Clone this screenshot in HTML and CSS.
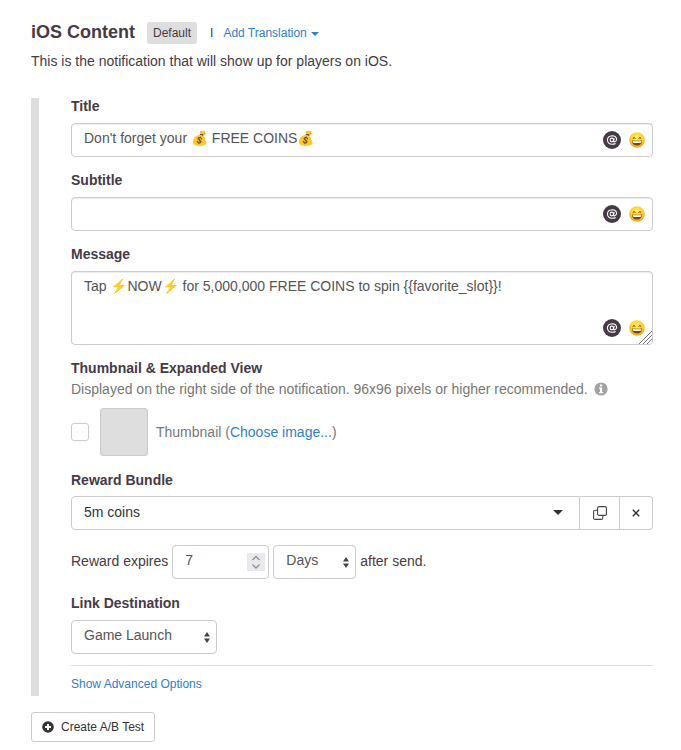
FILE: index.html
```html
<!DOCTYPE html>
<html lang="en">
<head>
<meta charset="utf-8">
<meta name="viewport" content="width=device-width, initial-scale=1">
<title>iOS Content</title>
<link rel="stylesheet" href="styles.css">
</head>
<body>
<svg class="sprite" aria-hidden="true">
  <defs>
    <radialGradient id="face" cx="50%" cy="35%" r="65%">
      <stop offset="0" stop-color="#ffec5c"/><stop offset=".6" stop-color="#fdd036"/><stop offset="1" stop-color="#eda01c"/>
    </radialGradient>
    <symbol id="grin" viewBox="0 0 16 16">
      <circle cx="8" cy="8" r="7.8" fill="url(#face)"/>
      <path d="M4 6.2Q5.1 4.8 6.2 6.2M9.800 6.200Q10.900 4.800 12 6.200" fill="none" stroke="#6b3d12" stroke-width="1" stroke-linecap="round"/>
      <path d="M2.800 8.400Q8 9 13.200 8.400Q12.800 13.500 8 13.500T2.800 8.400Z" fill="#7a4616"/>
      <path d="M3.500 9Q8 9.600 12.500 9L12.100 10.700Q8 11.300 3.900 10.700Z" fill="#fff"/>
    </symbol>
    <symbol id="at" viewBox="0 0 18 18">
      <circle cx="9" cy="9" r="9" fill="#463a47"/>
      <ellipse cx="8.800" cy="9" rx="1.700" ry="1.900" fill="none" stroke="#fff" stroke-width="1.100"/>
      <path d="M11.200 7L10.600 10Q10.700 11.100 11.800 10.800Q13.700 10.100 13.600 8.300Q13.200 4.800 9.200 4.700Q4.600 4.900 4.400 9Q4.800 13.200 9.100 13.300Q11 13.300 12.600 12.400" fill="none" stroke="#fff" stroke-width="1.100"/>
    </symbol>
  </defs>
</svg>

<main class="page">
  <header class="heading">
    <h1>iOS Content</h1>
    <span class="badge">Default</span>
    <span class="divider">I</span>
    <a class="small-link" href="#translate">Add Translation<span class="caret"></span></a>
  </header>
  <p class="intro">This is the notification that will show up for players on iOS.</p>

  <form class="panel">
    <div class="field">
      <label for="title">Title</label>
      <div class="box">
        <input class="control" id="title" type="text" value="Don't forget your 💰 FREE COINS💰">
        <div class="tools">
          <button type="button" aria-label="Insert variable"><svg class="at"><use href="#at"/></svg></button>
          <button type="button" aria-label="Insert emoji"><svg class="grin"><use href="#grin"/></svg></button>
        </div>
      </div>
    </div>
    <div class="field">
      <label for="subtitle">Subtitle</label>
      <div class="box">
        <input class="control" id="subtitle" type="text">
        <div class="tools">
          <button type="button" aria-label="Insert variable"><svg class="at"><use href="#at"/></svg></button>
          <button type="button" aria-label="Insert emoji"><svg class="grin"><use href="#grin"/></svg></button>
        </div>
      </div>
    </div>
    <div class="field">
      <label for="message">Message</label>
      <div class="box">
        <textarea class="control" id="message" rows="3">Tap ⚡NOW⚡ for 5,000,000 FREE COINS to spin {{favorite_slot}}!</textarea>
        <div class="tools">
          <button type="button" aria-label="Insert variable"><svg class="at"><use href="#at"/></svg></button>
          <button type="button" aria-label="Insert emoji"><svg class="grin"><use href="#grin"/></svg></button>
        </div>
        <svg class="grip" viewBox="0 0 13 13" aria-hidden="true"><path d="M0 13L13 0M4 13L13 4M8 13L13 8" fill="none" stroke="#777"/></svg>
      </div>
    </div>

    <div class="field thumbnail">
      <h2>Thumbnail &amp; Expanded View</h2>
      <p class="help">Displayed on the right side of the notification. 96x96 pixels or higher recommended.
        <svg class="info" viewBox="0 0 14 14" aria-hidden="true"><circle cx="7" cy="7" r="6.6" fill="#a3a3a3"/><path d="M5.9 2.5H8.1V4.4H5.9ZM5 5.5H8.1V10H9.2V11.3H5V10H6V6.8H5Z" fill="#fff"/></svg></p>
      <div class="thumb-row">
        <input type="checkbox" id="thumb">
        <span class="swatch"></span>
        <span class="thumb-text"><label for="thumb">Thumbnail</label> (<a href="#image">Choose image...</a>)</span>
      </div>
    </div>

    <div class="field reward">
      <label for="bundle">Reward Bundle</label>
      <div class="group">
        <div class="bundle">
          <select class="control" id="bundle"><option>5m coins</option></select>
          <svg class="down" viewBox="0 0 10 5" aria-hidden="true"><path d="M0 0H10L5 5Z" fill="#333"/></svg>
        </div>
        <button type="button" class="addon" aria-label="Duplicate"><svg width="14" height="14" viewBox="0 0 14 14" fill="none" stroke="#444" stroke-width="1.1"><rect x="4.6" y=".6" width="8.8" height="8.8" rx="1.5"/><path d="M4.6 4.2H2.1Q.6 4.2.6 5.7V11.9Q.6 13.4 2.1 13.4H8.3Q9.8 13.4 9.8 11.9V9.4"/></svg></button>
        <button type="button" class="addon" aria-label="Clear"><svg width="8" height="8" viewBox="0 0 8 8"><path d="M.8.8L7.200 7.200M7.200.8L.8 7.200" stroke="#333" stroke-width="1.400"/></svg></button>
      </div>
    </div>

    <div class="expires">
      <label for="amount">Reward expires</label>
      <div class="amount">
        <input class="control" id="amount" type="number" value="7">
        <svg class="spin" viewBox="0 0 18 18" aria-hidden="true"><path d="M0 0H18V18H0Z" fill="#e9e9ed"/><path d="M5.500 7L9 3.500L12.500 7M5.500 11.500L9 15L12.500 11.500" fill="none" stroke="#8f8f9b" stroke-width="1.3"/></svg>
      </div>
      <div class="pick unit">
        <select class="control" aria-label="Unit"><option>Days</option></select>
        <svg class="updown" viewBox="0 0 6 11" aria-hidden="true"><path d="M0 4.500L3 0L6 4.500ZM0 6.500H6L3 11Z" fill="#444"/></svg>
      </div>
      <span>after send.</span>
    </div>

    <div class="field link">
      <label for="dest">Link Destination</label>
      <div class="pick dest">
        <select class="control" id="dest"><option>Game Launch</option></select>
        <svg class="updown" viewBox="0 0 6 11" aria-hidden="true"><path d="M0 4.500L3 0L6 4.500ZM0 6.500H6L3 11Z" fill="#444"/></svg>
      </div>
    </div>

    <div class="advanced"><a class="small-link" href="#advanced">Show Advanced Options</a></div>
  </form>

  <button type="button" class="create"><svg width="12" height="12" viewBox="0 0 12 12" aria-hidden="true"><circle cx="6" cy="6" r="5.800" fill="#333"/><path d="M6 3V9M3 6H9" stroke="#fff" stroke-width="1.900"/></svg>Create A/B Test</button>
</main>
</body>
</html>
```
FILE: styles.css
```css
* { box-sizing: border-box; }
body {
  margin: 0;
  background: #fff;
  color: #463a47;
  font: 14px/20px "Liberation Sans", Arial, sans-serif;
}
.sprite { position: absolute; width: 0; height: 0; }
h1, h2, p { margin: 0; }
a { color: #337ec4; text-decoration: none; }
button, input, select, textarea { font: inherit; color: #555; margin: 0; }
button { padding: 0; border: 0; background: none; cursor: pointer; }
svg { display: block; }

.page { padding: 20px 28px 8px 31px; }
.heading { display: flex; align-items: center; height: 24px; font-size: 12px; }
h1 { font-size: 18px; line-height: 24px; }
.badge { margin: 2px 0 0 12px; padding: 0 6px; line-height: 22px; border-radius: 3px; background: #dedede; }
.divider { margin: 2px 10px 0 13px; }
.small-link { font-size: 12px; }
.heading .small-link { margin-top: 2px; }
.caret { display: inline-block; margin-left: 4px; vertical-align: middle; border: 4px solid transparent; border-top-color: currentColor; border-bottom: 0; }
.intro { margin-top: 7px; }

.panel { margin-top: 27px; padding-left: 32px; border-left: 8px solid #dedede; }
.field > label, h2 { display: block; font-size: 14px; line-height: 20px; font-weight: bold; }
.field { margin-bottom: 13px; }
.field:first-child > label { line-height: 16px; padding-bottom: 2px; }

.control {
  display: block;
  width: 100%;
  height: 34px;
  padding: 4px 12px 8px;
  border: 1px solid #ccc;
  border-radius: 4px;
  background: #fff;
  appearance: none;
}
.box { position: relative; margin-top: 7px; }
.box .control { padding-right: 64px; box-shadow: inset 0 1px 1px rgba(0, 0, 0, .075); }
textarea.control { height: 74px; resize: none; }
.tools { position: absolute; right: 8px; bottom: 8px; display: flex; align-items: center; gap: 8px; }
.at { width: 18px; height: 18px; }
.grin { width: 16px; height: 16px; }
.grip { position: absolute; right: 1px; bottom: 1px; width: 13px; height: 13px; }

.help { display: flex; align-items: center; gap: 6px; margin-top: 1px; color: #777; }
.info { width: 14px; height: 14px; }
.thumb-row { display: flex; align-items: center; margin-top: 9px; color: #777; }
.thumb-row input { appearance: none; width: 18px; height: 18px; border: 1px solid #ccc; border-radius: 3px; background: #fff; }
.swatch { width: 48px; height: 48px; margin: 0 8px 0 11px; border: 1px solid #ccc; border-radius: 3px; background: #dedede; }
.thumbnail { margin-bottom: 14px; }

.group { display: flex; margin-top: 6px; }
.bundle { position: relative; flex: 1; }
.bundle .control { padding: 5px 12px 7px; border-radius: 4px 0 0 4px; color: #333; }
.down { position: absolute; right: 17px; top: 14px; width: 10px; height: 5px; }
.addon { display: flex; align-items: center; justify-content: center; width: 40px; border: 1px solid #ccc; border-left: 0; }
.addon + .addon { width: 33px; border-radius: 0 4px 4px 0; }

.expires { display: flex; align-items: center; gap: 4px; margin: 15px 0 14px; }
.expires > label, .expires > span { padding-bottom: 2px; }
.amount, .pick { position: relative; }
.amount { width: 97px; }
.unit { width: 83px; }
.dest { width: 146px; }
#amount::-webkit-inner-spin-button { appearance: none; }
.spin { position: absolute; right: 4px; top: 8px; width: 18px; height: 18px; }
.updown { position: absolute; right: 7px; top: 12px; width: 6px; height: 11px; }
.pick.dest { margin-top: 7px; }
.field.link { margin-bottom: 11px; }
.advanced { padding: 8px 0 2px; border-top: 1px solid #ddd; }
.advanced a { display: block; }

.create {
  display: flex;
  align-items: center;
  gap: 7px;
  height: 30px;
  margin-top: 16px;
  padding: 0 10px;
  border: 1px solid #ccc;
  border-radius: 3px;
  background: #fff;
  color: #333;
  font-size: 12px;
}
```
